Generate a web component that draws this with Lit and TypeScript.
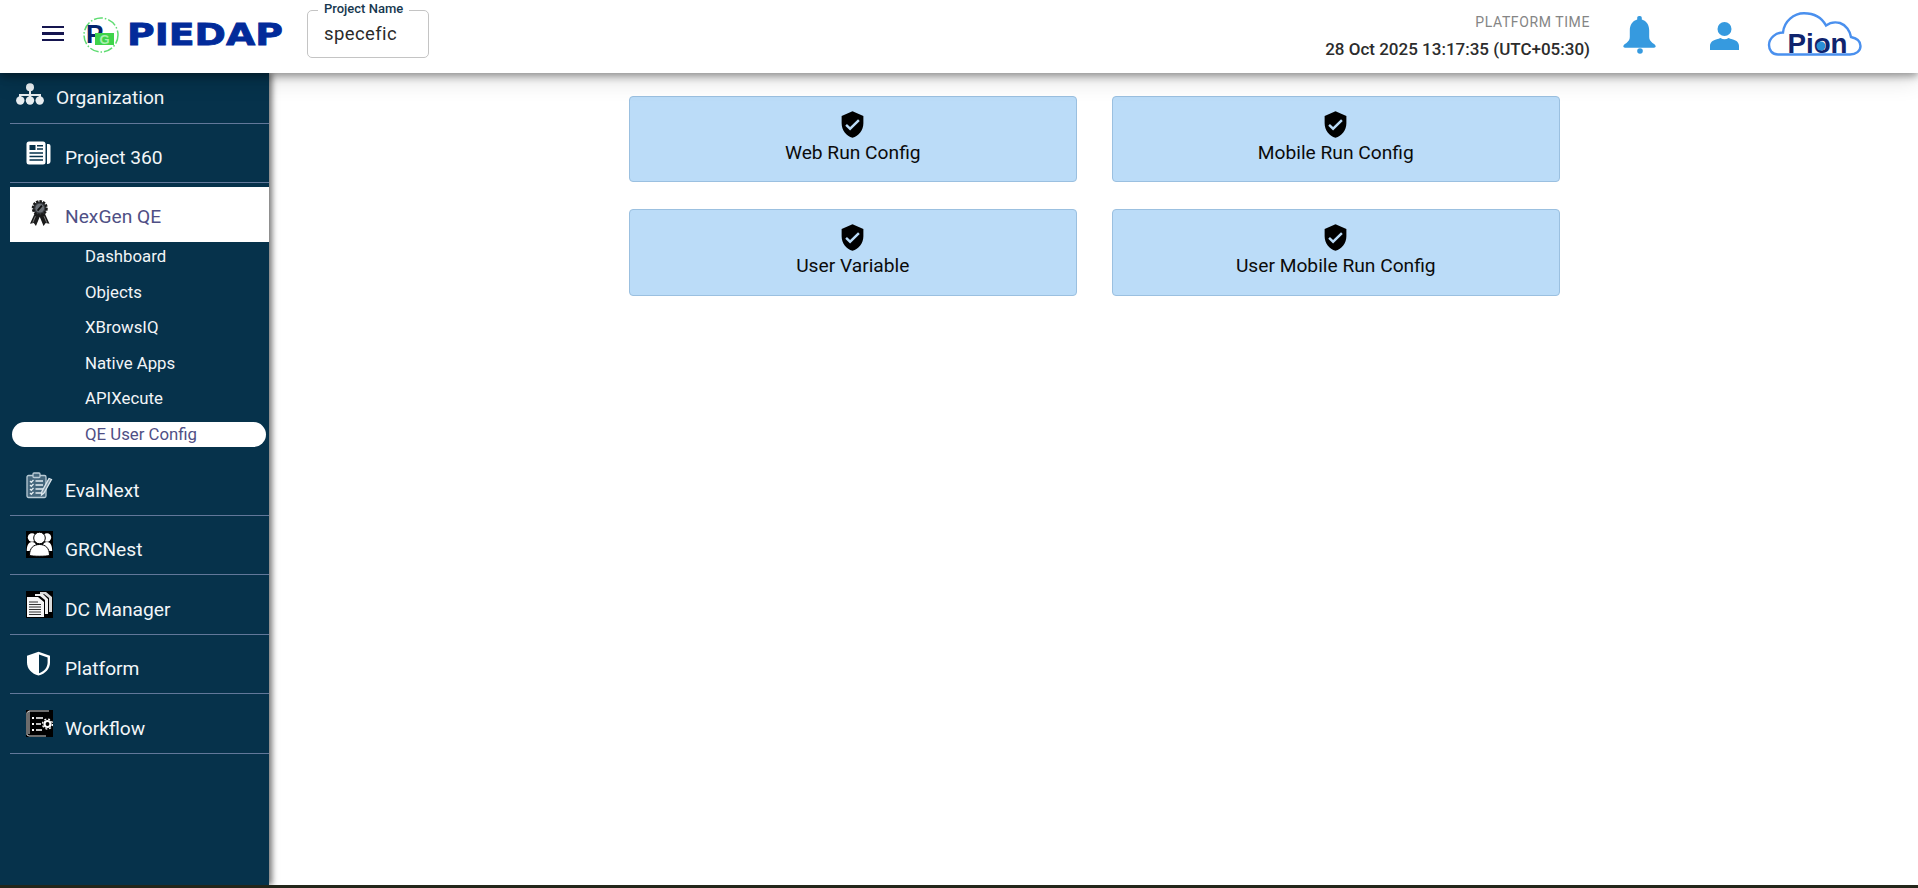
import { LitElement, html, css, svg } from "lit";
import { customElement } from "lit/decorators.js";

const W = "#ffffff";

const icons: Record<string, unknown> = {
  org: html`<svg viewBox="0 0 28 22" width="28" height="22">
    <circle cx="14" cy="4.200" r="4" fill="#e8edf0"/>
    <path d="M13 7h2v4h10v4h-2v-2H15v2h-2v-2H5v2H3v-4h10z" fill="#e8edf0"/>
    <circle cx="4.300" cy="17.500" r="4.200" fill="#e8edf0"/><circle cx="14" cy="17.500" r="4.200" fill="#e8edf0"/><circle cx="23.700" cy="17.500" r="4.200" fill="#e8edf0"/>
  </svg>`,
  project: html`<svg viewBox="0 0 25 24" width="25" height="24">
    <rect x="0.500" y="0.500" width="19" height="23" rx="2.500" fill="${W}"/>
    <path d="M21 3h1.500a2 2 0 0 1 2 2v15a3 3 0 0 1-3 3H21z" fill="${W}"/>
    <rect x="3.500" y="4" width="6" height="5" fill="#06324b"/>
    <path d="M11 4.800h6M11 8h6M3.500 12h13.500M3.500 15.500h13.500M3.500 19h13.500" stroke="#06324b" stroke-width="1.500" fill="none"/>
  </svg>`,
  ribbon: html`<svg viewBox="0 0 18 24" width="19.500" height="26">
    <path d="M4.500 12 0 22l3.500-.8L5.500 24 9 15.500 12.500 24l2-2.800 3.500.8L13.500 12z" fill="#1a1a1a"/>
    <path d="M5 15 2.500 21M13 15l2.500 6" stroke="#8a8a8a" stroke-width=".8"/>
    <circle cx="9" cy="7.500" r="6.200" fill="#3a3d42" stroke="#1a1a1a" stroke-width="2.400" stroke-dasharray="2.200 1"/>
    <circle cx="9" cy="7.500" r="4" fill="#6b7076"/>
    <path d="M7 9.800 11 5.200" stroke="#0e0e0e" stroke-width="1.600"/>
  </svg>`,
  eval: html`<svg viewBox="0 0 27 27" width="27" height="27" fill="none" stroke="#b9cbd6" stroke-width="1.300">
    <rect x="1" y="3.500" width="19" height="22" rx="1.500" fill="#45677d"/>
    <rect x="7" y="1" width="7" height="4.500" rx="1" fill="#45677d"/>
    <path d="M9.500 9h7.500M9.500 13h7.500M9.500 17h7.500M9.500 21h7.500M4 9l1.300 1.300L7.500 8M4 13l1.300 1.300L7.500 12M4 17l1.300 1.300L7.500 16M4 21l1.300 1.300L7.500 20" stroke="#e4edf2"/>
    <path d="M25.500 7.500 18 21l-2.500 2 .3-3.200L23 6.500z" fill="#7f98a8" stroke="#dce6ec"/>
  </svg>`,
  grc: html`<svg viewBox="0 0 27 27" width="27" height="27">
    <rect width="27" height="27" fill="#000"/>
    <circle cx="6" cy="6.500" r="4.200" fill="${W}"/><circle cx="21" cy="6.500" r="4.200" fill="${W}"/>
    <path d="M0.800 20c0-6 2-9 5.200-9s5.200 3 5.200 9zM15.800 20c0-6 2-9 5.200-9s5.200 3 5.200 9z" fill="${W}"/>
    <circle cx="13.500" cy="7" r="5.800" fill="${W}" stroke="#000" stroke-width="1"/>
    <path d="M3.500 24.500c0-7.500 4-11 10-11s10 3.500 10 11c-3 1-17 1-20 0z" fill="${W}" stroke="#000" stroke-width="1"/>
  </svg>`,
  dc: html`<svg viewBox="0 0 27 27" width="27" height="27">
    <rect width="27" height="27" fill="#000"/>
    <path d="M14 1h6l6 5v15h-3V7l-5-4h-4z" fill="#d9d9d9"/>
    <path d="M9 3h8l5 5v15h-3V9l-5-4H9z" fill="#efefef"/>
    <path d="M1 6h11l6 5v15H1z" fill="#f5f5f5"/>
    <path d="M3 11h9M3 13.500h12M3 16h12M3 18.500h12M3 21h12M3 23.500h12" stroke="#333" stroke-width="1.100"/>
  </svg>`,
  platform: html`<svg viewBox="0 0 25 25" width="25" height="25">
    <path d="M12.500 0.800 1 4.800v6.700c0 6.300 4.700 11.300 11.500 13 6.800-1.700 11.500-6.700 11.500-13V4.800z" fill="${W}"/>
    <path d="M13 3.400v18.800c4.900-1.600 8.600-5.600 8.600-10.700V6.500z" fill="#06324b"/>
  </svg>`,
  workflow: html`<svg viewBox="0 0 27 27" width="27" height="27">
    <rect width="27" height="27" fill="#000"/>
    <path d="M1 2.500 3 1h20M1 2.500V25l2 1h17M3 1v23" stroke="#d8d8d8" stroke-width="1" fill="none"/>
    <path d="M6 8h2M6 14h2M6 20h2" stroke="${W}" stroke-width="2"/>
    <path d="M10 8h7M10 14h5M10 20h6" stroke="${W}" stroke-width="1.600"/>
    <circle cx="21.500" cy="14" r="3" fill="none" stroke="${W}" stroke-width="2.200"/>
    <circle cx="21.500" cy="14" r="5" fill="none" stroke="${W}" stroke-width="1.300" stroke-dasharray="2 1.930"/>
  </svg>`,
};

const shield = svg`<path d="M12 1 3 5v6c0 5.550 3.840 10.740 9 12 5.160-1.260 9-6.450 9-12V5zm-2 16-4-4 1.410-1.410L10 14.170l6.590-6.590L18 9z"/>`;

@customElement("app-root")
export class AppRoot extends LitElement {
  static styles = css`
    :host { display: flex; flex-direction: column; height: 888px; overflow: hidden; font-family: Roboto, "Noto Sans", sans-serif; background: #fff; }
    .top { position: relative; z-index: 3; height: 73px; flex: none; display: flex; align-items: center; background: #fff; box-shadow: 0 3px 8px rgba(0,0,0,.38), 0 6px 24px rgba(0,0,0,.14); padding-right: 56px; box-sizing: border-box; }
    .burger { margin-left: 42px; width: 22px; display: flex; flex-direction: column; gap: 4px; margin-top: -6px; }
    .burger i { display: block; height: 2.500px; background: #15154f; }
    .logo { display: flex; align-items: center; margin-left: 18px; margin-top: -3px; width: 217px; }
    .mark { flex: none; }
    .word { font-family: "DejaVu Sans", sans-serif; font-weight: 700; font-size: 30px; line-height: 30px; color: #022b9a; -webkit-text-stroke: .8px #022b9a; transform: scaleX(1.260); transform-origin: left center; margin-left: 7px; }
    .field { position: relative; margin-left: 8px; width: 122px; height: 48px; box-sizing: border-box; border: 1px solid #c4c4c4; border-radius: 5px; margin-top: -6px; padding: 12px 0 0 16px; font-size: 18.500px; line-height: 22px; color: #2b2b2b; letter-spacing: .4px; }
    .legend { position: absolute; left: 10px; top: -10px; padding: 0 6px; background: #fff; font-size: 13px; line-height: 16px; font-weight: 500; color: #17384f; letter-spacing: 0; }
    .clock { margin-left: auto; text-align: right; margin-top: -2px; }
    .clock .l { font-size: 14px; line-height: 16px; color: #858585; letter-spacing: .6px; }
    .clock .d { margin-top: 10px; font-size: 17px; line-height: 18px; font-weight: 500; color: #2c2c2c; }
    .bell { margin-left: 33px; margin-top: -3px; display: block; }
    .user { margin-left: 52px; margin-top: -2px; display: block; }
    .pion { margin-left: 28px; margin-top: -6px; display: block; overflow: visible; }
    .body { flex: 1; display: flex; min-height: 0; }
    .side { position: relative; z-index: 2; width: 269px; flex: none; background: #06324b; box-shadow: 3px 0 6px rgba(0,0,0,.55); padding-left: 10px; box-sizing: border-box; }
    .item { height: 59.500px; box-sizing: border-box; border-bottom: 1px solid #62789a; display: flex; align-items: center; padding: 10px 0 0 16px; font-size: 19.200px; font-weight: 450; color: #f2f6f8; }
    .item .ic { width: 39px; flex: none; display: flex; margin-top: -10px; }
    .item.first { height: 50.500px; padding: 0 0 0 6px; }
    .item.first .ic { width: 40px; margin-top: -7px; }
    .item.first span { margin-top: 0; }
    .item.active { height: 55px; margin-top: 4px; background: #fff; color: #4f4f85; font-weight: 400; border-bottom: none; padding-top: 0; }
    .item.active .ic { margin-top: -3px; padding-left: 4px; width: 35px; }
    .item.active span { margin-top: 4px; }
    .subs { display: flex; flex-direction: column; gap: 10.500px; padding: 2px 3px 9.500px 2px; }
    .sub { height: 25px; line-height: 25px; border-radius: 13px; padding-left: 73px; font-size: 16.800px; font-weight: 450; color: #f2f5f7; }
    .sub.on { background: #fff; color: #4f4f85; font-weight: 400; }
    .main { flex: 1; display: grid; grid-template-columns: repeat(2, 447.500px); grid-template-rows: 86px 87px; gap: 27px 35.500px; justify-content: center; align-content: start; padding: 23px 0 0 1.500px; }
    .card { box-sizing: border-box; background: #bbdcf8; border: 1px solid #9bc0e0; border-radius: 4px; display: flex; flex-direction: column; align-items: center; padding-top: 13px; font-size: 19.200px; line-height: 22px; color: #0b0b0b; }
    .card svg { display: block; margin-bottom: 3px; }
    .foot { height: 3px; flex: none; background: #23261a; position: relative; z-index: 3; }
  `;

  render() {
    const top = [
      ["project", "Project 360"],
    ];
    const rest = [
      ["eval", "EvalNext"],
      ["grc", "GRCNest"],
      ["dc", "DC Manager"],
      ["platform", "Platform"],
      ["workflow", "Workflow"],
    ];
    const subs = ["Dashboard", "Objects", "XBrowsIQ", "Native Apps", "APIXecute"];
    const cards = ["Web Run Config", "Mobile Run Config", "User Variable", "User Mobile Run Config"];
    return html`
      <header class="top">
        <div class="burger"><i></i><i></i><i></i></div>
        <div class="logo">
          <svg class="mark" width="38" height="36" viewBox="0 0 38 36">
            <circle cx="19" cy="18" r="17" fill="none" stroke="#5fdc72" stroke-width="1.500" stroke-dasharray="9 2 1.500 2"/>
            <text x="4" y="26" font-family="Liberation Sans, sans-serif" font-weight="700" font-size="26" fill="#04246e">P</text>
            <rect x="13" y="16" width="19" height="12" fill="#3ed44a"/>
            <text x="22.500" y="26.500" text-anchor="middle" font-family="Liberation Sans, sans-serif" font-weight="700" font-size="13" fill="#a9eeb0">G</text>
          </svg>
          <span class="word">PIEDAP</span>
        </div>
        <div class="field"><span class="legend">Project Name</span>specefic</div>
        <div class="clock">
          <div class="l">PLATFORM TIME</div>
          <div class="d">28 Oct 2025 13:17:35 (UTC+05:30)</div>
        </div>
        <svg class="bell" width="34" height="38" viewBox="0 0 34 38" fill="#369adf">
          <path d="M17 0c1.100 0 1.800.8 1.800 2v1.600c4.900 1.300 7.400 5.700 7.400 11v6.400c0 2.400 1.100 4.200 3.300 5.900 1.600 1.200 3.200 2 3.200 3.400 0 .9-.7 1.400-1.700 1.400H2c-1 0-1.700-.5-1.700-1.400 0-1.400 1.600-2.200 3.200-3.400 2.200-1.700 3.300-3.500 3.300-5.900v-6.400c0-5.300 2.500-9.700 7.400-11V2c0-1.200.7-2 1.800-2z"/>
          <circle cx="17" cy="35" r="2.800"/>
        </svg>
        <svg class="user" width="31" height="28" viewBox="0 0 31 28" fill="#369adf">
          <circle cx="15.500" cy="7" r="7"/>
          <path d="M1 28v-4c0-3.500 2.500-5.600 6-6.500 2.500-.7 3.500-1.100 4.500-1.500 2.500 1.800 5.500 1.800 8 0 1 .4 2 .8 4.500 1.500 3.500.9 6 3 6 6.500v4z"/>
        </svg>
        <svg class="pion" width="94" height="44" viewBox="0 0 94 44">
          <path d="M10 42.500C4 42.500 1 38 1 33 1 26 8 20.500 15 20.500 16 9 26 1.200 36 1.200 46 1.200 54 6 58 13.500 62 10.500 68 10 72 11 78 13 82 19 83 25 88 26 92.500 29 92.500 34 92.500 39 88 42.500 82 42.500Z" fill="none" stroke="#4a90ee" stroke-width="2.400"/>
          <text x="19.500" y="41" font-family="Liberation Sans, sans-serif" font-size="28" font-weight="700" fill="#10246e" textLength="60" lengthAdjust="spacingAndGlyphs">Pion</text>
          <circle cx="53" cy="34" r="4.500" fill="#2a8fd6"/>
        </svg>
      </header>
      <div class="body">
        <nav class="side">
          <div class="item first"><div class="ic">${icons.org}</div><span>Organization</span></div>
          ${top.map(([i, t]) => html`<div class="item"><div class="ic">${icons[i]}</div><span>${t}</span></div>`)}
          <div class="item active"><div class="ic">${icons.ribbon}</div><span>NexGen QE</span></div>
          <div class="subs">
            ${subs.map((s) => html`<div class="sub">${s}</div>`)}
            <div class="sub on">QE User Config</div>
          </div>
          ${rest.map(([i, t]) => html`<div class="item"><div class="ic">${icons[i]}</div><span>${t}</span></div>`)}
        </nav>
        <main class="main">
          ${cards.map((c) => html`<div class="card"><svg width="29" height="29" viewBox="0 0 24 24" fill="#000">${shield}</svg>${c}</div>`)}
        </main>
      </div>
      <div class="foot"></div>
    `;
  }
}
